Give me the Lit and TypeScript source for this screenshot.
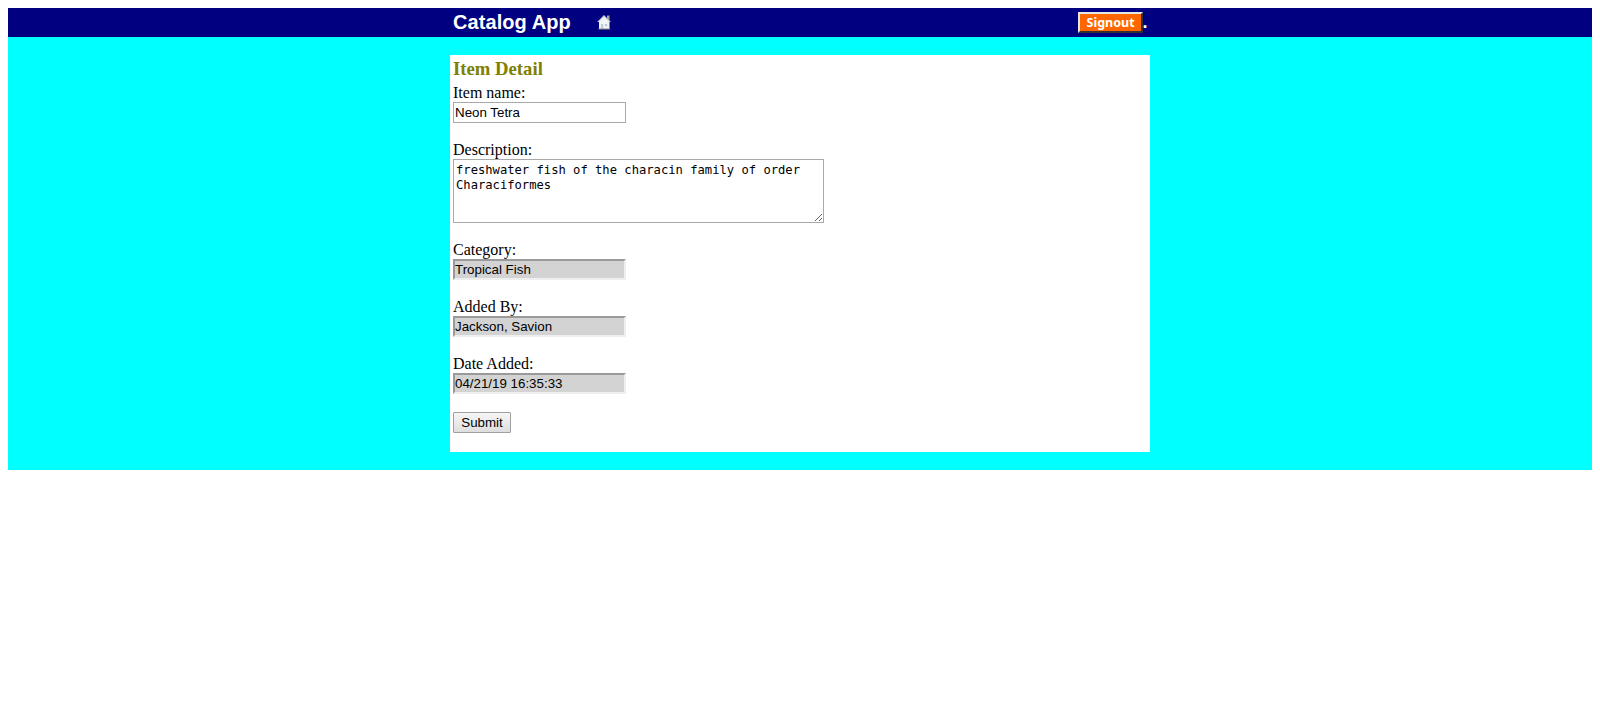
import { LitElement, html, css } from "lit";
import { customElement } from "lit/decorators.js";

@customElement("app-root")
export class AppRoot extends LitElement {
  static styles = css`
    :host { display: block; padding: 8px; font: 16px/18px "Liberation Serif", serif; color: #000; }
    * { box-sizing: border-box; }
    .bar { background: #000080; height: 29px; }
    .inner { width: 700px; height: 29px; margin: 0 auto; padding: 0 3px; display: flex; align-items: center; color: #fff; font-family: "Liberation Sans", sans-serif; font-weight: bold; }
    .brand { font-size: 20px; line-height: 23px; letter-spacing: 0.08px; padding-bottom: 1px; }
    .home { width: 16px; height: 16px; margin: 0 0 2px 25px; display: block; }
    .signout { margin: 0 0 1px auto; width: 65px; height: 21px; padding: 1px 0 0 1px; border: 2px outset #e8e8e8; border-color: #e6e6e6 #858585 #858585 #e6e6e6; background: #ff6600; color: #fff; font: bold 12.5px/16px "Noto Sans", sans-serif; }
    .dot { font-size: 18px; width: 4.4px; padding-bottom: 1px; }
    .page { background: #00ffff; height: 433px; padding-top: 18px; }
    .card { width: 700px; height: 397px; margin: 0 auto; background: #fff; padding: 3px 3px 0; }
    h1 { margin: 0 0 5px; font-size: 18.72px; line-height: 21px; color: #808000; }
    .field { margin-bottom: 18px; display: flex; flex-direction: column; align-items: flex-start; }
    label { display: block; height: 18px; }
    input { width: 173px; height: 21px; margin: 0; padding: 1px; border: 1px solid #a9a9a9; border-radius: 0; background: #fff; color: #000; font: 13.333px "Liberation Sans", sans-serif; outline: none; }
    input.locked { background: #d3d3d3; border: 2px solid; border-color: #9a9a9a #eee #eee #9a9a9a; padding: 0; }
    textarea { display: block; width: 371px; height: 64px; margin: 0; padding: 3px 2px; border: 1px solid #a9a9a9; border-radius: 0; color: #000; background: #fff; font: 12.17px/15px "DejaVu Sans Mono", monospace; resize: both; outline: none; overflow: auto; }
    .submit { display: block; width: 58px; height: 21px; padding: 0; border: 1px solid #a0a0a0; border-radius: 1px; background: linear-gradient(#f6f6f6, #dedede); color: #000; font: 13.333px "Liberation Sans", sans-serif; }
  `;

  private locked(label: string, value: string) {
    return html`<div class="field"><label>${label}</label><input class="locked" readonly .value=${value} /></div>`;
  }

  render() {
    return html`
      <header class="bar">
        <div class="inner">
          <span class="brand">Catalog App</span>
          <svg class="home" viewBox="0 0 16 16">
            <path d="M11 1.5h2.5v6H11z" fill="#a5a59c" />
            <path d="M3 7.5h10.5V15H3z" fill="#f0f4f6" />
            <path d="M8 1 1 8h2l5-5 5 5h2z" fill="#c4cbcd" />
            <path d="M8 2.5 3 7.5v1h10v-1z" fill="#f3f5f4" />
            <path d="M5 10h2.2v5H5z" fill="#c2ced6" />
            <path d="M9 10h2.2v2.2H9z" fill="#b9cad6" />
            <path d="M2.5 14.5h11.5v1H2.5z" fill="#8b9088" />
          </svg>
          <button class="signout">Signout</button><span class="dot">.</span>
        </div>
      </header>
      <main class="page">
        <section class="card">
          <h1>Item Detail</h1>
          <div class="field"><label>Item name:</label><input .value=${"Neon Tetra"} /></div>
          <div class="field">
            <label>Description:</label>
            <textarea spellcheck="false" .value=${"freshwater fish of the characin family of order Characiformes"}></textarea>
          </div>
          ${this.locked("Category:", "Tropical Fish")}
          ${this.locked("Added By:", "Jackson, Savion")}
          ${this.locked("Date Added:", "04/21/19 16:35:33")}
          <button class="submit">Submit</button>
        </section>
      </main>
    `;
  }
}
